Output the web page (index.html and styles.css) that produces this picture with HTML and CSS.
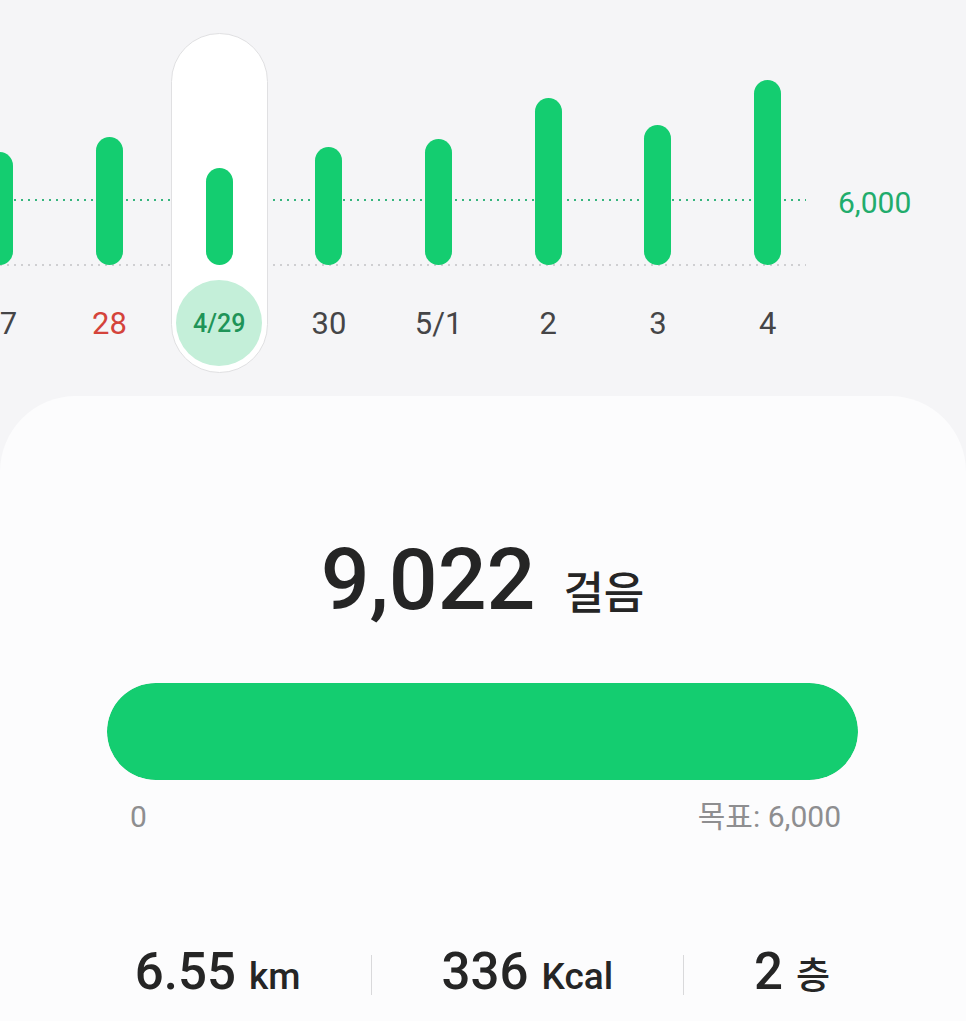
FILE: index.html
```html
<!DOCTYPE html>
<html lang="ko">
<head>
    <meta charset="UTF-8">
    <meta name="viewport" content="width=device-width, initial-scale=1.0">
    <title>걸음 수</title>
    <link rel="stylesheet" href="styles.css">
</head>
<body>
    <!-- Weekly steps chart -->
    <section class="chart">
        <div class="plot">
            <div class="days">
                <div class="day">
                    <div class="slot">
                        <div class="track"><span class="bar" style="height: 113px"></span></div>
                        <span class="date">27</span>
                    </div>
                </div>
                <div class="day">
                    <div class="slot">
                        <div class="track"><span class="bar" style="height: 128px"></span></div>
                        <span class="date holiday">28</span>
                    </div>
                </div>
                <div class="day">
                    <div class="slot selected">
                        <div class="track"><span class="bar" style="height: 97px"></span></div>
                        <span class="date">4/29</span>
                    </div>
                </div>
                <div class="day">
                    <div class="slot">
                        <div class="track"><span class="bar" style="height: 118px"></span></div>
                        <span class="date">30</span>
                    </div>
                </div>
                <div class="day">
                    <div class="slot">
                        <div class="track"><span class="bar" style="height: 126px"></span></div>
                        <span class="date">5/1</span>
                    </div>
                </div>
                <div class="day">
                    <div class="slot">
                        <div class="track"><span class="bar" style="height: 167px"></span></div>
                        <span class="date">2</span>
                    </div>
                </div>
                <div class="day">
                    <div class="slot">
                        <div class="track"><span class="bar" style="height: 140px"></span></div>
                        <span class="date">3</span>
                    </div>
                </div>
                <div class="day">
                    <div class="slot">
                        <div class="track"><span class="bar" style="height: 185px"></span></div>
                        <span class="date">4</span>
                    </div>
                </div>
            </div>
        </div>
        <span class="goal-mark">6,000</span>
    </section>

    <!-- Selected day summary -->
    <section class="card">
        <div class="steps">
            <span class="count">9,022</span>
            <span class="count-unit">걸음</span>
        </div>

        <div class="progress"><div class="progress-fill" style="width: 100%"></div></div>
        <div class="scale">
            <span>0</span>
            <span>목표: 6,000</span>
        </div>

        <div class="stats">
            <div class="stat"><span class="value">6.55</span><span class="unit">km</span></div>
            <span class="divider"></span>
            <div class="stat"><span class="value">336</span><span class="unit">Kcal</span></div>
            <span class="divider"></span>
            <div class="stat"><span class="value">2</span><span class="unit">층</span></div>
        </div>
    </section>
</body>
</html>
```

FILE: styles.css
```css
html, body {
    height: 100%;
}
body {
    margin: 0;
    font-family: Roboto, "Noto Sans CJK KR", sans-serif;
    background-color: #f5f5f7;
    color: #252525;
    display: flex;
    flex-direction: column;
    overflow: hidden;
}

/* chart */
.chart {
    display: flex;
    align-items: flex-start;
    padding-top: 33px;
    flex: none;
}
.plot {
    width: 806px;
    flex: none;
    background-image:
        linear-gradient(to right, #37b57e 2px, transparent 2px),
        linear-gradient(to right, #cfcfd2 2px, transparent 2px);
    background-size: 7px 2px, 7px 2px;
    background-repeat: repeat-x;
    background-position: 0 166px, 0 231px;
}
.days {
    display: flex;
    margin-left: -55px;
}
.day {
    width: 109.7px;
    flex: none;
    display: flex;
    justify-content: center;
}
.slot {
    width: 97px;
    height: 340px;
    box-sizing: border-box;
    border: 1px solid transparent;
    border-radius: 49px;
    display: flex;
    flex-direction: column;
    align-items: center;
}
.slot.selected {
    background-color: #fff;
    border-color: #e0e0e2;
}
.track {
    height: 231px;
    display: flex;
    align-items: flex-end;
}
.bar {
    display: block;
    width: 27px;
    border-radius: 14px;
    background-color: #14cd70;
}
.date {
    margin-top: 15px;
    width: 86px;
    height: 86px;
    border-radius: 50%;
    display: flex;
    align-items: center;
    justify-content: center;
    font-size: 31px;
    color: #454547;
    white-space: nowrap;
}
.date.holiday {
    color: #d4433b;
}
.slot.selected .date {
    background-color: #c4efd9;
    color: #1f9458;
    font-size: 25px;
    font-weight: 500;
}
.goal-mark {
    margin: 153px 0 0 32px;
    line-height: 34px;
    font-size: 30px;
    color: #21ac6c;
}

/* summary card */
.card {
    flex: 1;
    margin-top: 23px;
    padding: 141px 108px 0 107px;
    background-color: #fcfcfd;
    border-radius: 76px 76px 0 0;
}
.steps {
    display: flex;
    justify-content: center;
    align-items: baseline;
}
.count {
    font-size: 86px;
    line-height: 1;
    font-weight: 500;
}
.count-unit {
    margin-left: 28px;
    font-size: 44px;
    font-weight: 500;
}
.progress {
    margin-top: 60px;
    height: 97px;
    border-radius: 49px;
    background-color: #e4e6e8;
    overflow: hidden;
}
.progress-fill {
    height: 100%;
    border-radius: 49px;
    background-color: #14cd70;
}
.scale {
    display: flex;
    justify-content: space-between;
    margin-top: 20px;
    padding: 0 17px 0 23px;
    font-size: 30px;
    line-height: 34px;
    color: #8e8e90;
}
.stats {
    margin-top: 108px;
    display: flex;
    justify-content: center;
    align-items: center;
    line-height: 60px;
}
.stat {
    display: flex;
    align-items: baseline;
    white-space: nowrap;
}
.value {
    font-size: 51px;
    font-weight: 500;
}
.unit {
    margin-left: 13px;
    font-size: 37px;
    font-weight: 500;
}
.divider {
    width: 1px;
    height: 40px;
    margin: 0 70px;
    background-color: #d9d9db;
}
```
